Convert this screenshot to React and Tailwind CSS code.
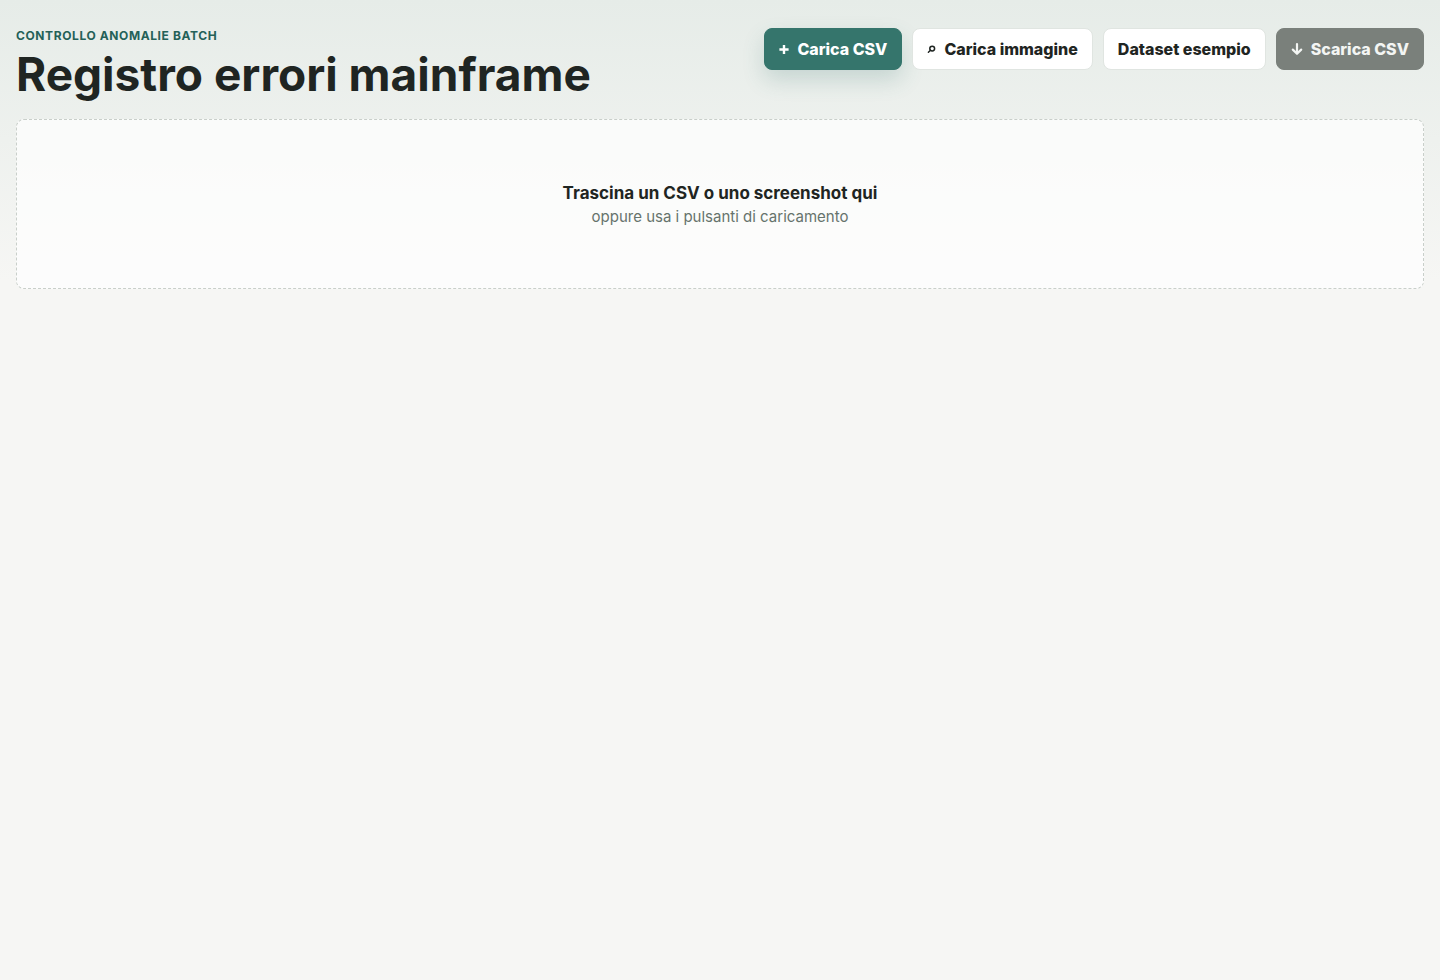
import React, { useRef } from 'react';

function PlusGlyph() {
  return (
    <svg width="10" height="12" viewBox="0 0 10 12" fill="none" stroke="currentColor" strokeWidth="2.4" aria-hidden="true">
      <path d="M5 2v9M0.4 6.5h9.2" />
    </svg>
  );
}

function SearchGlyph() {
  return (
    <svg width="9" height="10" viewBox="0 0 9 10" fill="none" stroke="currentColor" strokeWidth="1.5" strokeLinecap="round" aria-hidden="true">
      <circle cx="5.2" cy="4.6" r="2.4" />
      <path d="M3.5 6.3 1.4 8.2" />
    </svg>
  );
}

function DownGlyph() {
  return (
    <svg width="12" height="14" viewBox="0 0 12 14" fill="none" stroke="currentColor" strokeWidth="2.2" strokeLinecap="round" strokeLinejoin="round" aria-hidden="true">
      <path d="M6 2v9.6M1.8 7.6 6 11.8l4.2-4.2" />
    </svg>
  );
}

const baseButton =
  'inline-flex min-h-[42px] items-center justify-center gap-2 rounded-lg border px-3.5 text-base font-extrabold whitespace-nowrap';

function Header({ onCsv, onImage }) {
  return (
    <header className="flex flex-wrap items-start justify-between gap-4">
      <div>
        <p className="text-xs leading-4 font-bold tracking-wider text-[#246158] uppercase">
          Controllo anomalie batch
        </p>
        <h1 className="mt-1.5 text-[46px] leading-[48px] font-bold">Registro errori mainframe</h1>
      </div>

      <div className="flex flex-wrap gap-2.5">
        <button
          type="button"
          onClick={onCsv}
          className={`${baseButton} border-[#35756c] bg-[#35756c] text-white shadow-[0_10px_22px_rgba(53,117,108,0.2)]`}
        >
          <PlusGlyph />
          Carica CSV
        </button>
        <button type="button" onClick={onImage} className={`${baseButton} border-[#e0e5e1] bg-white`}>
          <SearchGlyph />
          Carica immagine
        </button>
        <button type="button" className={`${baseButton} border-[#e0e5e1] bg-white`}>
          Dataset esempio
        </button>
        <button
          type="button"
          disabled
          className={`${baseButton} border-[#7a807b] bg-[#7a807b] text-[#f3f5f3]`}
        >
          <DownGlyph />
          Scarica CSV
        </button>
      </div>
    </header>
  );
}

function DropZone() {
  return (
    <section className="mt-[21px] flex min-h-[170px] flex-col items-center justify-center rounded-lg border border-dashed border-[#c9cfca] bg-white/70 px-6 pt-[26px] pb-6 text-center">
      <strong className="text-[17px] leading-6 font-bold">Trascina un CSV o uno screenshot qui</strong>
      <span className="text-[15px] leading-6 text-[#66736c]">oppure usa i pulsanti di caricamento</span>
    </section>
  );
}

function App() {
  const csvInput = useRef(null);
  const imageInput = useRef(null);

  return (
    <div className="min-h-screen bg-[#f6f6f4] bg-[linear-gradient(180deg,#e6ece8_0px,#f6f6f4_280px)] font-['Inter',sans-serif] text-[#1f2522]">
      <main className="px-4 py-7">
        <Header onCsv={() => csvInput.current.click()} onImage={() => imageInput.current.click()} />
        <input ref={csvInput} type="file" accept=".csv" aria-label="File CSV" className="hidden" />
        <input ref={imageInput} type="file" accept="image/*" aria-label="Immagine" className="hidden" />
        <DropZone />
      </main>
    </div>
  );
}

export default App;
